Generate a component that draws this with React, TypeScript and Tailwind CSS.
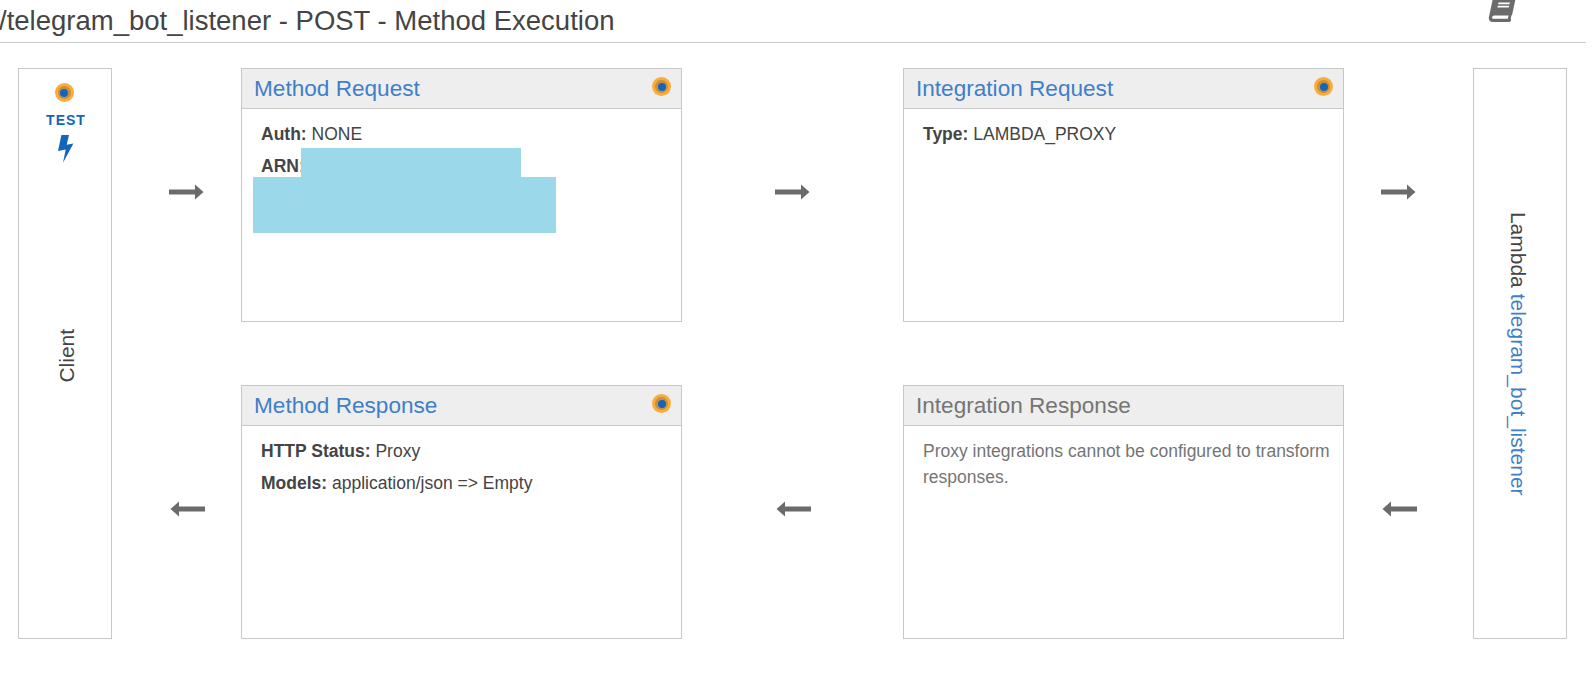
import { FaBook } from "react-icons/fa"

function Dot() {
  return (
    <span className="flex h-[19px] w-[19px] items-center justify-center rounded-full bg-[#fbab3a]">
      <span className="flex h-[13px] w-[13px] items-center justify-center rounded-full bg-[#c98f3d]">
        <span className="block h-[8px] w-[8px] rounded-full bg-[#1166bb]" />
      </span>
    </span>
  )
}

function Bolt() {
  return (
    <svg width="16" height="28" viewBox="0 0 16 28">
      <path d="M3.4 0 L11 0 L8.7 9.8 L15.4 8.5 L5 27.7 L7.7 14.5 L0 16 Z" fill="#1166bb" />
    </svg>
  )
}

function Arrow({ left }: { left?: boolean }) {
  return (
    <svg width="35" height="16" viewBox="0 0 35 16" className={left ? "rotate-180" : ""}>
      <path d="M0 5.5 H26 V0.5 L34.5 8 L26 15.5 V10.5 H0 Z" fill="#6b6b6b" />
    </svg>
  )
}

function Card({
  title,
  muted,
  dot,
  children,
}: {
  title: string
  muted?: boolean
  dot?: boolean
  children?: React.ReactNode
}) {
  return (
    <div className="flex h-[254px] flex-col border border-[#c8c8c8] bg-white">
      <div className="flex h-10 items-center justify-between border-b border-[#c8c8c8] bg-[#eeeeee] pl-[12px] pr-[10px]">
        <span className={`mt-[2px] text-[22.6px] leading-none ${muted ? "text-[#757575]" : "text-[#3f7fc8]"}`}>{title}</span>
        {dot && (
          <span className="-mt-1">
            <Dot />
          </span>
        )}
      </div>
      <div className="pl-[19px] pr-[10px] pt-[9px] text-[17.5px] leading-[32px] text-[#444444]">{children}</div>
    </div>
  )
}

export default function App() {
  return (
    <div className="h-[680px] w-[1596px] overflow-hidden bg-white font-['Liberation_Sans',Arial,sans-serif]">
      <div className="mr-[10px] flex h-[43px] items-start justify-between border-b border-[#cccccc] pr-[71px]">
        <h2 className="-ml-[1px] pt-[5px] text-[27.5px] leading-[32px] text-[#444444]">
          /telegram_bot_listener - POST - Method Execution
        </h2>
        <FaBook className="mt-[-4px] -skew-x-12 text-[26px] text-[#6b6b6b]" />
      </div>

      <div className="ml-[18px] mt-[25px] grid grid-cols-[94px_129px_441px_221px_441px_129px_94px] grid-rows-[254px_63px_254px]">
        <div className="row-span-3 flex flex-col items-center border border-[#c8c8c8] pt-[14px]">
          <span className="pr-[2px]">
            <Dot />
          </span>
          <span className="mt-[10px] pl-[2px] text-[14px] font-bold leading-4 tracking-[1px] text-[#1166bb]">TEST</span>
          <span className="mt-[7px] pl-[2px]">
            <Bolt />
          </span>
          <div className="flex flex-1 items-center pb-[90px] pl-[4px]">
            <span className="-rotate-90 whitespace-nowrap text-[21px] text-[#444444]">Client</span>
          </div>
        </div>

        <div className="flex items-center justify-center pb-[6px] pl-[19px]">
          <Arrow />
        </div>
        <Card title="Method Request" dot>
          <p>
            <b>Auth:</b> NONE
          </p>
          <p>
            <b>ARN:</b>
          </p>
          {/* redacted ARN */}
          <div className="absolute left-[253px] top-[177px] h-[56px] w-[303px] bg-[#9bd9ea]" />
          <div className="absolute left-[301px] top-[148px] h-[29px] w-[220px] bg-[#9bd9ea]" />
        </Card>
        <div className="flex items-center justify-center pb-[6px]">
          <Arrow />
        </div>
        <Card title="Integration Request" dot>
          <p>
            <b>Type:</b> LAMBDA_PROXY
          </p>
        </Card>
        <div className="flex items-center justify-center pb-[6px] pr-[20px]">
          <Arrow />
        </div>

        <div className="row-span-3 flex items-center justify-center border border-[#c8c8c8] pr-[5px]">
          <span className="rotate-90 whitespace-nowrap text-[21px] text-[#444444]">
            Lambda <span className="text-[#3f7fc8]">telegram_bot_listener</span>
          </span>
        </div>

        <div className="col-span-5" />

        <div className="col-start-2 row-start-3 flex items-center justify-center pb-[6px] pl-[21px]">
          <Arrow left />
        </div>
        <Card title="Method Response" dot>
          <p>
            <b>HTTP Status:</b> Proxy
          </p>
          <p>
            <b>Models:</b> application/json =&gt; Empty
          </p>
        </Card>
        <div className="flex items-center justify-center pb-[6px] pl-[2px]">
          <Arrow left />
        </div>
        <Card title="Integration Response" muted>
          <p className="mt-[3px] leading-[26px] text-[#757575]">
            Proxy integrations cannot be configured to transform responses.
          </p>
        </Card>
        <div className="flex items-center justify-center pb-[6px] pr-[18px]">
          <Arrow left />
        </div>
      </div>
    </div>
  )
}
